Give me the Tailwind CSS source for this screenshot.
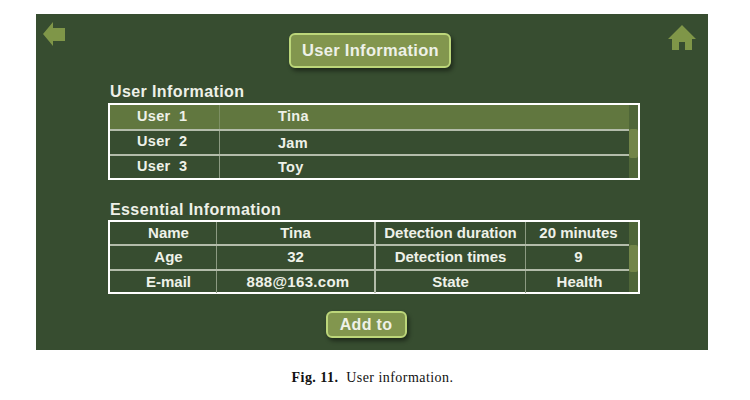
<!DOCTYPE html>
<html lang="en">
<head>
  <meta charset="UTF-8" />
  <title>User information</title>
  <script src="https://cdn.jsdelivr.net/npm/@tailwindcss/browser@4"></script>
</head>
<body class="bg-white w-[750px] h-[400px] overflow-hidden font-['Liberation_Sans',sans-serif]">

  <div class="ml-[36px] mt-[14px] w-[672px] h-[336px] bg-[#374d30] relative pt-[19px] text-[#eef1e8] font-bold">
    <!-- back -->
    <svg class="absolute left-[7px] top-[8px] w-[22px] h-[24px]" viewBox="0 0 22 24"><path d="M0 12 L10 0 V6 H22 V19 H10 V24 Z" fill="#7f9648"/></svg>
    <!-- home -->
    <svg class="absolute left-[632px] top-[11px] w-[28px] h-[25px]" viewBox="0 0 28 25"><path d="M14 0 L28 14 H24 V25 H17 V17 H11 V25 H4 V14 H0 Z" fill="#7f9648"/></svg>

    <div class="flex justify-center">
      <div class="w-[162px] h-[35px] ml-[-4px] pl-[1px] flex items-center justify-center rounded-[6px] border-2 border-[#bcd67a] bg-[#82964e] text-[16.5px] tracking-[0.3px] shadow-[2px_3px_4px_rgba(0,0,0,0.45)]">User Information</div>
    </div>

    <div class="ml-[72px] w-[532px]">
      <h2 class="text-[16px] tracking-[0.4px] leading-[18px] mt-[15px] ml-[2px] h-[20px]">User Information</h2>
      <div class="relative border-2 border-white h-[77px] text-[14.5px] tracking-[0.3px]">
        <div class="flex h-[26px] bg-[#61773f] border-b-2 border-[#b3bcaa] mr-[9px]">
          <div class="w-[110px] border-r border-[#7d8f63] pl-[27px] leading-[22px]">User&nbsp; 1</div>
          <div class="pl-[58px] leading-[22px]">Tina</div>
        </div>
        <div class="flex h-[25px] border-b-2 border-[#b3bcaa] mr-[9px]">
          <div class="w-[110px] border-r border-[#8c9a82] pl-[27px] leading-[21px]">User&nbsp; 2</div>
          <div class="pl-[58px] leading-[24px]">Jam</div>
        </div>
        <div class="flex h-[22px] mr-[9px]">
          <div class="w-[110px] border-r border-[#8c9a82] pl-[27px] leading-[21px]">User&nbsp; 3</div>
          <div class="pl-[58px] leading-[23px]">Toy</div>
        </div>
        <!-- scrollbar -->
        <div class="absolute right-0 top-0 bottom-0 w-[9px] bg-[#4f6638]">
          <div class="mt-[24px] h-[29px] rounded-[2px] bg-[#728548]"></div>
        </div>
      </div>

      <h2 class="text-[16px] tracking-[0.4px] leading-[18px] mt-[21px] ml-[2px] h-[19px]">Essential Information</h2>
      <div class="relative border-2 border-white h-[74px] text-[15px] text-center">
        <div class="grid grid-cols-[107px_159px_150px_103px] h-[24px] border-b-2 border-[#b3bcaa] mr-[9px] leading-[22px]">
          <div class="border-r border-[#8c9a82] pl-[11px]">Name</div>
          <div class="border-r-2 border-[#b3bcaa]">Tina</div>
          <div class="border-r border-[#8c9a82]">Detection duration</div>
          <div class="pl-[2px]">20 minutes</div>
        </div>
        <div class="grid grid-cols-[107px_159px_150px_103px] h-[25px] border-b-2 border-[#b3bcaa] mr-[9px] leading-[22px]">
          <div class="border-r border-[#8c9a82] pl-[11px]">Age</div>
          <div class="border-r-2 border-[#b3bcaa]">32</div>
          <div class="border-r border-[#8c9a82]">Detection times</div>
          <div class="pl-[2px]">9</div>
        </div>
        <div class="grid grid-cols-[107px_159px_150px_103px] h-[21px] mr-[9px] leading-[22px]">
          <div class="border-r border-[#8c9a82] pl-[11px]">E-mail</div>
          <div class="border-r-2 border-[#b3bcaa] tracking-[0.3px] pl-[5px]">888@163.com</div>
          <div class="border-r border-[#8c9a82]">State</div>
          <div class="pl-[4px]">Health</div>
        </div>
        <div class="absolute right-0 top-0 bottom-0 w-[9px] bg-[#4f6638]">
          <div class="mt-[23px] h-[27px] rounded-[2px] bg-[#728548]"></div>
        </div>
      </div>
    </div>

    <div class="flex justify-center mt-[17px]">
      <div class="w-[81px] h-[27px] ml-[-12px] flex items-center justify-center rounded-[6px] border-2 border-[#bcd67a] bg-[#82964e] text-[16px] tracking-[0.3px] shadow-[2px_3px_4px_rgba(0,0,0,0.45)]">Add to</div>
    </div>
  </div>

  <p class="mt-[19px] pr-[5px] text-center text-[14px] leading-[18px] text-[#111] font-['Liberation_Serif',serif] tracking-[0.45px]"><b>Fig. 11.</b>&nbsp; User information.</p>
</body>
</html>
